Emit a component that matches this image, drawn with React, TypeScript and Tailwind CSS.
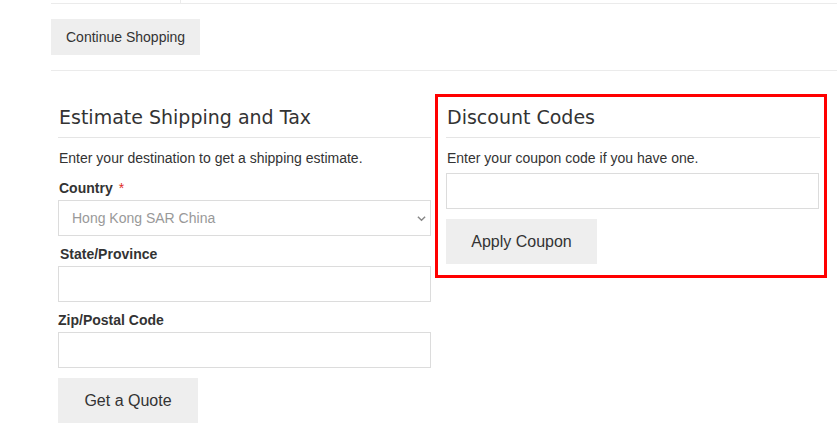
import React from 'react';

const body = { fontFamily: '"Liberation Sans", Arial, sans-serif' };
const head = { fontFamily: '"DejaVu Sans", Verdana, sans-serif' };

const Label: React.FC<{ text: string; required?: boolean; className?: string }> = ({ text, required, className }) => (
  <label className={`block h-[20px] leading-[20px] text-[14px] font-bold text-[#333] ${className ?? ''}`}>
    {text}
    {required && <span className="ml-[6px] text-[#e02b27] font-normal">*</span>}
  </label>
);

const Field: React.FC = () => (
  <input type="text" className="block w-full h-[36px] mt-[2px] border border-[#dcdcdc] bg-white outline-none px-3 text-[14px]" />
);

export default function App() {
  return (
    <div className="min-h-screen bg-white text-[#333] text-[14px]" style={body}>
      <div className="pl-[51px]">
        {/* tail of the cart table */}
        <div className="h-[4px] border-b border-[#ebebeb] flex">
          <div className="w-[130px] border-r border-[#ebebeb]" />
        </div>

        <div className="pt-[15px] pb-[15px] border-b border-[#ebebeb]">
          <button className="h-[36px] px-[15px] bg-[#eeeeee] text-[14px] text-[#333]">Continue Shopping</button>
        </div>

        <div className="flex pt-[23px]">
          {/* Estimate shipping */}
          <div className="w-[384px] pl-[7px] pr-[4px] pt-[9px]">
            <h2 className="h-[28px] leading-[28px] text-[19px] text-[#333] pl-[1px]" style={head}>
              Estimate Shipping and Tax
            </h2>
            <div className="mt-[6px] border-t border-[#e5e5e5]" />
            <p className="mt-[10px] h-[20px] leading-[20px] pl-[1px]">Enter your destination to get a shipping estimate.</p>

            <Label text="Country" required className="mt-[10px] pl-[1px]" />
            <div className="relative mt-[2px]">
              <select
                className="block w-full h-[36px] appearance-none border border-[#dcdcdc] bg-white pl-[13px] text-[14px] text-[#999] outline-none"
                defaultValue="HK"
              >
                <option value="HK">Hong Kong SAR China</option>
              </select>
              <svg
                className="absolute right-[5px] top-[14px] w-[9px] h-[9px] text-[#888]"
                viewBox="0 0 10 10"
                fill="none"
                stroke="currentColor"
                strokeWidth={1.6}
              >
                <path d="M1 3l4 4 4-4" />
              </svg>
            </div>

            <Label text="State/Province" className="mt-[8px] pl-[2px]" />
            <Field />

            <Label text="Zip/Postal Code" className="mt-[8px]" />
            <Field />

            <button className="mt-[10px] h-[45px] w-[140px] bg-[#eeeeee] text-[16px] text-[#333]">Get a Quote</button>
          </div>

          {/* Discount codes */}
          <div className="w-[392px] h-[184px] border-[3px] border-[#ff0000] pl-[8px] pr-[4px] pt-[6px]">
            <h2 className="h-[28px] leading-[28px] text-[19px] text-[#333] pl-[1px]" style={head}>
              Discount Codes
            </h2>
            <div className="mt-[6px] border-t border-[#e5e5e5]" />
            <p className="mt-[10px] h-[20px] leading-[20px] pl-[1px]">Enter your coupon code if you have one.</p>
            <input type="text" className="block w-[373px] h-[36px] mt-[5px] border border-[#dcdcdc] outline-none px-3" />
            <button className="mt-[10px] h-[45px] w-[151px] bg-[#eeeeee] text-[16px] text-[#333]">Apply Coupon</button>
          </div>
        </div>
      </div>
    </div>
  );
}
